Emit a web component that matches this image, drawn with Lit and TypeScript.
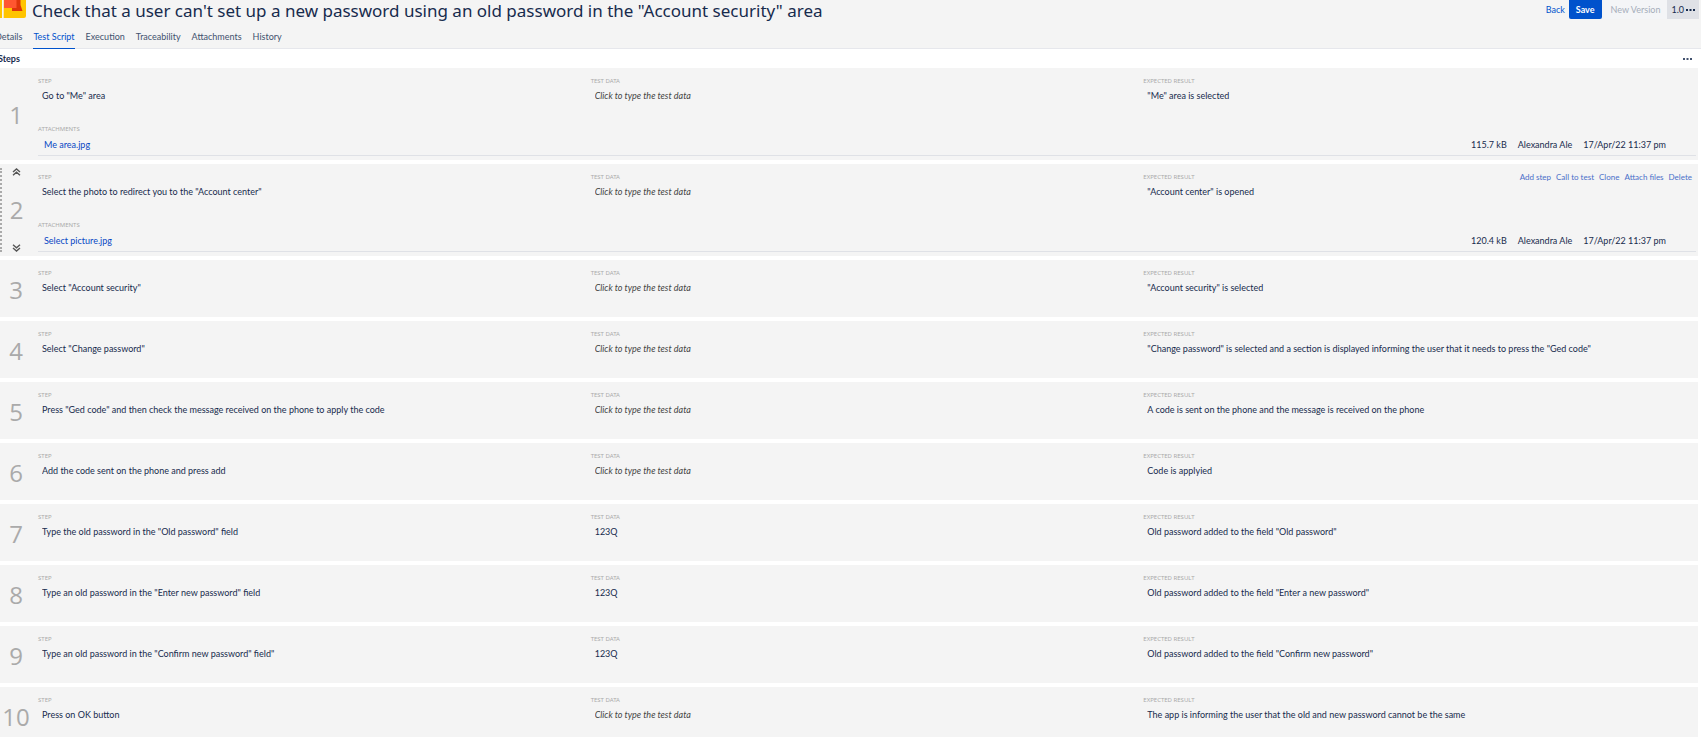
import { LitElement, html, css, svg, nothing } from "lit";
import { customElement, property, state } from "lit/decorators.js";
import { classMap } from "lit/directives/class-map.js";

interface Attachment {
  name: string;
  size: string;
  author: string;
  date: string;
}

interface Step {
  step: string;
  data: string;
  result: string;
  attachment?: Attachment;
}

const STEPS: Step[] = [
  {
    step: 'Go to "Me" area',
    data: "",
    result: '"Me" area is selected',
    attachment: { name: "Me area.jpg", size: "115.7 kB", author: "Alexandra Ale", date: "17/Apr/22 11:37 pm" },
  },
  {
    step: 'Select the photo to redirect you to the "Account center"',
    data: "",
    result: '"Account center" is opened',
    attachment: { name: "Select picture.jpg", size: "120.4 kB", author: "Alexandra Ale", date: "17/Apr/22 11:37 pm" },
  },
  { step: 'Select "Account security"', data: "", result: '"Account security" is selected' },
  {
    step: 'Select "Change password"',
    data: "",
    result: '"Change password" is selected and a section is displayed informing the user that it needs to press the "Ged code"',
  },
  {
    step: 'Press "Ged code" and then check the message received on the phone to apply the code',
    data: "",
    result: "A code is sent on the phone and the message is received on the phone",
  },
  { step: "Add the code sent on the phone and press add", data: "", result: "Code is applyied" },
  {
    step: 'Type the old password in the "Old password" field',
    data: "123Q",
    result: 'Old password added to the field "Old password"',
  },
  {
    step: 'Type an old password in the "Enter new password" field',
    data: "123Q",
    result: 'Old password added to the field "Enter a new password"',
  },
  {
    step: 'Type an old password in the "Confirm new password" field"',
    data: "123Q",
    result: 'Old password added to the field "Confirm new password"',
  },
  {
    step: "Press on OK button",
    data: "",
    result: "The app is informing the user that the old and new password cannot be the same",
  },
];

const dots = svg`<svg class="dots" viewBox="0 0 9 2" width="9" height="2" aria-hidden="true">
  <path fill="currentColor" d="M0 0h2v2H0zM3.5 0h2v2h-2zM7 0h2v2H7z"/></svg>`;

const chevrons = (down: boolean) => html`<svg viewBox="0 0 9 8" width="9" height="8" aria-hidden="true">
  <path fill="none" stroke="currentColor" stroke-width="1.4"
    d=${down ? "M1 .8l3.5 3L8 .8M1 4l3.5 3L8 4" : "M1 4l3.5-3L8 4M1 7.2l3.5-3 3.5 3"} /></svg>`;

@customElement("step-row")
export class StepRow extends LitElement {
  @property({ attribute: false }) item!: Step;
  @property({ type: Number }) number = 1;
  @property({ type: Boolean }) active = false;

  static styles = css`
    :host {
      display: block;
    }
    button,
    input {
      font: inherit;
      color: inherit;
      background: none;
      border: 0;
      padding: 0;
      margin: 0;
    }
    .row {
      display: grid;
      grid-template-columns: 38px minmax(0, 1fr);
      min-height: 57px;
      background: #f4f4f4;
    }
    .gutter {
      display: grid;
      grid-template-rows: 12px 1fr 12px;
      justify-items: center;
      align-items: center;
      padding: 2px 6px 0 0;
    }
    .number {
      grid-row: 2;
      font-size: 24px;
      line-height: 28px;
      font-family: "Open Sans", sans-serif;
      color: #aaa;
    }
    .active .gutter {
      margin: 4px 0;
      padding: 0 7px 0 0;
      border-left: 2px dotted #aaa;
      grid-template-rows: 8px 1fr 8px;
    }
    .move {
      display: flex;
      color: #555;
      cursor: pointer;
    }
    .main {
      display: flex;
      flex-direction: column;
      padding: 9px 2px 0 0;
    }
    .cells {
      display: grid;
      grid-template-columns: repeat(3, minmax(0, 1fr));
    }
    .label {
      display: block;
      font: 6px/8px "Noto Sans", sans-serif;
      text-transform: uppercase;
      color: #aaa;
    }
    input {
      display: block;
      width: 100%;
      box-sizing: border-box;
      height: 15px;
      margin-top: 3px;
      padding: 0 4px;
      text-overflow: ellipsis;
      outline: 0;
    }
    input::placeholder {
      font-style: italic;
      color: #444;
      opacity: 1;
    }
    .cell {
      grid-row: 1;
    }
    .actions {
      grid-row: 1;
      grid-column: 3;
      justify-self: end;
      align-self: start;
      display: flex;
      gap: 5px;
      padding-right: 4px;
      font-size: 8px;
      line-height: 8px;
      color: #4a6fc9;
      z-index: 1;
    }
    .actions button {
      cursor: pointer;
    }
    .attachments {
      padding-top: 22px;
    }
    .file {
      display: flex;
      gap: 11px;
      height: 20px;
      line-height: 20px;
      margin-bottom: 4px;
      padding: 2px 30px 0 6px;
      border-bottom: 1px solid #dfe1e6;
    }
    .file a {
      flex: 1;
      color: #0747c4;
      text-decoration: none;
    }
  `;

  private cell(label: string, value: string, placeholder = "", column = 1) {
    return html`<label class="cell" style="grid-column:${column}">
      <span class="label">${label}</span>
      <input type="text" .value=${value} placeholder=${placeholder} />
    </label>`;
  }

  render() {
    const { item } = this;
    const file = item.attachment;
    return html`<div class=${classMap({ row: true, active: this.active })}>
      <div class="gutter">
        ${this.active ? html`<button class="move" aria-label="Move step up">${chevrons(false)}</button>` : nothing}
        <span class="number">${this.number}</span>
        ${this.active ? html`<button class="move" aria-label="Move step down">${chevrons(true)}</button>` : nothing}
      </div>
      <div class="main">
        <div class="cells">
          ${this.cell("Step", item.step, "", 1)}
          ${this.cell("Test data", item.data, "Click to type the test data", 2)}
          ${this.cell("Expected result", item.result, "", 3)}
          ${this.active
            ? html`<div class="actions">
                ${["Add step", "Call to test", "Clone", "Attach files", "Delete"].map(
                  (name) => html`<button>${name}</button>`,
                )}
              </div>`
            : nothing}
        </div>
        ${file
          ? html`<div class="attachments">
              <span class="label">Attachments</span>
              <div class="file">
                <a href="#">${file.name}</a>
                <span>${file.size}</span>
                <span>${file.author}</span>
                <span>${file.date}</span>
              </div>
            </div>`
          : nothing}
      </div>
    </div>`;
  }
}

@customElement("app-root")
export class AppRoot extends LitElement {
  @state() private tab = "Test Script";
  @state() private activeStep = 2;

  static styles = css`
    :host {
      display: block;
      height: 100vh;
      overflow: hidden;
      background: #fff;
      color: #172b4d;
      font: 9px/12px Lato, "Noto Sans", sans-serif;
    }
    button {
      font: inherit;
      color: inherit;
      border: 0;
      margin: 0;
      padding: 0;
      background: none;
      cursor: pointer;
    }
    header {
      background: #f4f4f4;
      border-bottom: 1px solid #e6e7ec;
    }
    .top {
      display: flex;
      align-items: flex-start;
      height: 25px;
      padding-right: 2px;
    }
    .logo {
      flex: none;
      display: block;
      margin-right: 6px;
    }
    h1 {
      flex: 1;
      margin: 0;
      font: 400 17px/22px "Noto Sans", sans-serif;
      white-space: nowrap;
    }
    .toolbar {
      display: flex;
      align-items: center;
      height: 19px;
    }
    .toolbar a {
      color: #0052cc;
      text-decoration: none;
      margin-right: 4px;
    }
    .toolbar button {
      height: 19px;
      padding: 0 7px;
    }
    .toolbar .save {
      background: #0052cc;
      color: #fff;
      font-weight: 700;
      border-radius: 0 0 2px 2px;
      margin-right: 2px;
    }
    .toolbar .new {
      color: #a5adba;
      background: #f4f5f7;
    }
    .toolbar .version {
      display: flex;
      align-items: center;
      gap: 2px;
      background: #dfe1e6;
      padding: 0 4px;
    }
    nav {
      display: flex;
      gap: 11px;
      margin-left: -5px;
    }
    nav button {
      height: 24px;
      padding: 1px 0 0;
      margin-bottom: -1px;
      color: #42526e;
      border-bottom: 1px solid transparent;
    }
    nav .on {
      color: #0052cc;
      border-color: #0052cc;
    }
    .heading {
      display: flex;
      align-items: center;
      justify-content: space-between;
      height: 19px;
      padding-right: 9px;
    }
    h2 {
      margin: 0 0 0 -2px;
      font: 700 9px/18px Lato, sans-serif;
    }
    .heading button {
      display: flex;
      color: #42526e;
    }
    .list {
      display: flex;
      flex-direction: column;
      gap: 4px;
      margin: 0 3px 0 0;
      padding: 0;
      list-style: none;
    }
  `;

  render() {
    return html`
      <header>
        <div class="top">
          <svg class="logo" viewBox="0 0 26 18" width="26" height="18" aria-hidden="true">
            <path fill="#ffc400" d="M0 0h26v16a2 2 0 0 1-2 2H0z" />
            <path fill="#f4f4f4" d="M2 0h1.700v18H2z" />
            <path fill="#de350b" d="M12 0h8.500v5l2 6H12z" />
            <path fill="#ff5630" d="M4 0h12.500v8H4z" />
          </svg>
          <h1>Check that a user can't set up a new password using an old password in the "Account security" area</h1>
          <div class="toolbar">
            <a href="#">Back</a>
            <button class="save">Save</button>
            <button class="new">New Version</button>
            <button class="version">1.0 ${dots}</button>
          </div>
        </div>
        <nav>
          ${["Details", "Test Script", "Execution", "Traceability", "Attachments", "History"].map(
            (name) => html`<button class=${classMap({ on: name === this.tab })} @click=${() => (this.tab = name)}>
              ${name}
            </button>`,
          )}
        </nav>
      </header>
      <main>
        <div class="heading">
          <h2>Steps</h2>
          <button aria-label="More actions">${dots}</button>
        </div>
        <ol class="list">
          ${STEPS.map(
            (item, i) => html`<li>
              <step-row
                .item=${item}
                .number=${i + 1}
                .active=${this.activeStep === i + 1}
                @mouseenter=${() => (this.activeStep = i + 1)}
              ></step-row>
            </li>`,
          )}
        </ol>
      </main>
    `;
  }
}
